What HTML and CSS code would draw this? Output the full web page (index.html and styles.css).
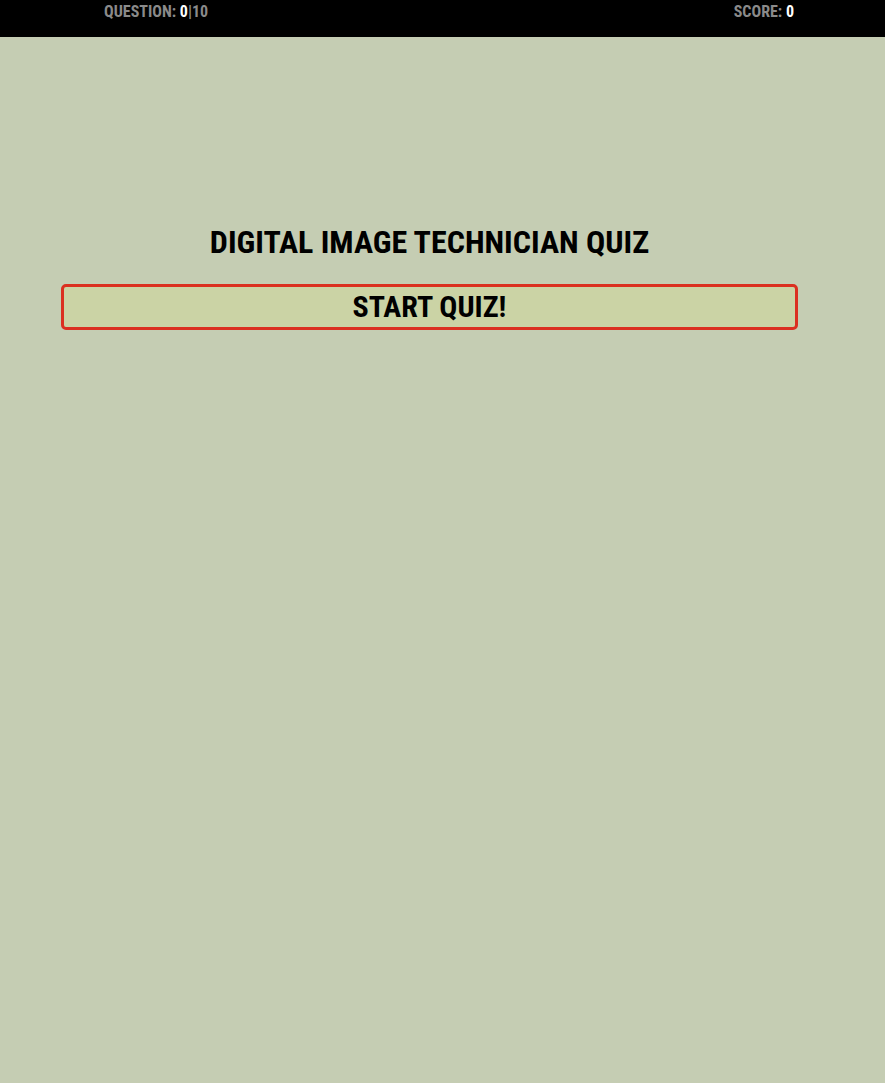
FILE: index.html
```html
<!DOCTYPE html>
<html lang="en">
<head>
<meta charset="utf-8">
<title>Digital Image Technician Quiz</title>
<link rel="stylesheet" href="styles.css">
</head>
<body>
<header class="hud">
  <div class="hud-item">QUESTION: <span class="hud-value">0</span>|10</div>
  <div class="hud-item">SCORE: <span class="hud-value">0</span></div>
</header>
<main class="quiz">
  <h1 class="quiz-title">DIGITAL IMAGE TECHNICIAN QUIZ</h1>
  <button class="start-btn" type="button">START QUIZ!</button>
</main>
</body>
</html>
```
FILE: styles.css
```css
html, body {
  margin: 0;
  padding: 0;
  background: #c5cdb3;
  min-height: 100%;
}
body {
  font-family: "Roboto Condensed", Roboto, "Liberation Sans", sans-serif;
  font-stretch: condensed;
  font-weight: 700;
  color: #000;
}
.hud {
  background: #000;
  height: 37px;
  display: flex;
  justify-content: space-between;
  padding: 0 91px 0 104px;
  box-sizing: border-box;
}
.hud-item {
  color: #8a8a8a;
  font-size: 16px;
  line-height: 24px;
}
.hud-value {
  color: #fff;
}
.quiz {
  display: flex;
  flex-direction: column;
  align-items: center;
  padding: 186px 87px 0 61px;
}
.quiz-title {
  margin: 0;
  font-size: 32px;
  line-height: 38px;
  font-weight: 700;
}
.start-btn {
  margin-top: 23px;
  width: 100%;
  height: 46px;
  box-sizing: border-box;
  background: #cbd3a5;
  border: 3px solid #db3020;
  border-radius: 5px;
  font-family: inherit;
  font-stretch: condensed;
  font-weight: 700;
  font-size: 30px;
  color: #000;
  padding: 0;
  line-height: 38px;
}
```
